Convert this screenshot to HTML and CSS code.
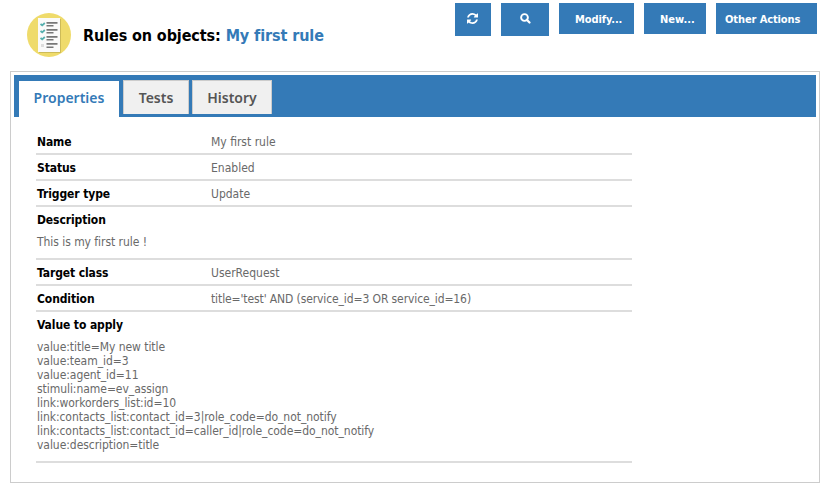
FILE: index.html
```html
<!DOCTYPE html>
<html lang="en">
<head>
<meta charset="utf-8">
<title>Rules on objects: My first rule</title>
<link rel="stylesheet" href="styles.css">
</head>
<body>
<header class="header">
  <svg class="badge" width="44" height="44" viewBox="0 0 44 44" aria-hidden="true">
    <circle cx="22" cy="22" r="22" fill="#efdb6b"/>
    <path d="M12 6h22v34H12z" fill="#cdbb58"/>
    <path d="M11 5h22v34H11z" fill="#fafafa"/>
    <path fill="#777" d="M19.500 9h11v1.700h-11zM19.500 12h7v1.600h-7zM19.500 16h11v1.700h-11zM19.500 19h7v1.600h-7zM19.500 23h11v1.700h-11zM19.500 26h7v1.600h-7zM19.500 30h11v1.700h-11zM19.500 33.500h7v1.600h-7z"/>
    <path fill="none" stroke="#55afae" stroke-width="1.800" d="M13.500 11l1.700 1.300 2.600-2.300M13.500 18l1.700 1.300 2.600-2.300M13.500 25l1.700 1.300 2.600-2.300"/>
    <path d="M14 31h3v3h-3z" fill="#ddd"/>
  </svg>
  <h1 class="title"><span class="title-class">Rules on objects:</span> <span class="title-name">My first rule</span></h1>
  <nav class="actions">
    <a class="btn btn-refresh" aria-label="Refresh"><svg width="11" height="11" viewBox="0 0 1536 1536"><path fill="#fff" d="M1511 928q0 5-1 7-64 268-268 434.500T764 1536q-146 0-282.500-55T238 1324l-129 129q-19 19-45 19t-45-19-19-45V960q0-26 19-45t45-19h448q26 0 45 19t19 45-19 45l-137 137q71 66 161 102t187 36q134 0 250-65t186-179q11-17 53-117 8-23 30-23h192q13 0 22.500 9.500t9.500 22.500zm25-800v448q0 26-19 45t-45 19h-448q-26 0-45-19t-19-45 19-45l138-138Q969 256 768 256q-134 0-250 65T332 500q-11 17-53 117-8 23-30 23H50q-13 0-22.500-9.500T18 608v-7q65-268 270-434.500T768 0q146 0 284 55.500T1297 212l130-129q19-19 45-19t45 19 19 45z"/></svg></a>
    <a class="btn btn-search" aria-label="Search"><svg width="11" height="11" viewBox="0 0 11 11"><circle cx="4.500" cy="4.500" r="3.400" fill="none" stroke="#fff" stroke-width="1.900"/><path d="M7 7l2.500 2.500" stroke="#fff" stroke-width="2.200" stroke-linecap="round"/></svg></a>
    <a class="btn btn-modify">Modify...</a>
    <a class="btn btn-new">New...</a>
    <a class="btn btn-other">Other Actions</a>
  </nav>
</header>
<main class="panel">
  <nav class="tabs">
    <a class="tab tab-active">Properties</a>
    <a class="tab tab-tests">Tests</a>
    <a class="tab tab-history">History</a>
  </nav>
  <dl class="details">
    <div class="row"><dt>Name</dt><dd>My first rule</dd></div>
    <div class="row"><dt>Status</dt><dd>Enabled</dd></div>
    <div class="row"><dt>Trigger type</dt><dd>Update</dd></div>
    <div class="row row-large"><dt>Description</dt><dd>This is my first rule !</dd></div>
    <div class="row"><dt>Target class</dt><dd>UserRequest</dd></div>
    <div class="row"><dt>Condition</dt><dd class="expression">title='test' AND (service_id=3 OR service_id=16)</dd></div>
    <div class="row row-large"><dt>Value to apply</dt><dd>value:title=My new title<br>value:team_id=3<br>value:agent_id=11<br>stimuli:name=ev_assign<br>link:workorders_list:id=10<br>link:contacts_list:contact_id=3|role_code=do_not_notify<br>link:contacts_list:contact_id=caller_id|role_code=do_not_notify<br>value:description=title</dd></div>
  </dl>
</main>
</body>
</html>
```
FILE: styles.css
```css
* { box-sizing: border-box; }
body {
  margin: 0;
  background: #fff;
  font: 12px/14px "DejaVu Sans Condensed", "DejaVu Sans", sans-serif;
  font-stretch: condensed;
  color: #696969;
}
.header {
  display: flex;
  align-items: flex-start;
  height: 71px;
  padding: 3px 3px 0 27px;
}
.badge { flex: none; margin-top: 10px; }
.title {
  margin: 23px 0 0 12px;
  font-size: 16px;
  line-height: 20px;
  white-space: nowrap;
  color: #000;
  letter-spacing: -0.1px;
}
.title-name { color: #347ab7; }
.actions { display: flex; gap: 10px; margin-left: auto; align-items: flex-start; }
.btn {
  display: flex;
  align-items: center;
  height: 31px;
  padding-top: 2px;
  background: #347ab7;
  color: #fff;
  font-size: 11px;
  font-weight: bold;
  white-space: nowrap;
}
.btn-refresh { width: 36px; height: 33px; padding: 0 0 3px 12px; }
.btn-search { width: 48px; height: 33px; padding: 0 0 3px 19px; }
.btn-modify { width: 75px; padding-left: 16px; letter-spacing: -0.1px; }
.btn-new { width: 62px; padding-left: 16px; }
.btn-other { width: 101px; padding-left: 9px; letter-spacing: -0.1px; }
.panel {
  width: 810px;
  height: 412px;
  margin-left: 10px;
  padding: 3px;
  border: 1px solid #ccc;
}
.tabs {
  display: flex;
  height: 42px;
  width: 802px;
  padding: 5px 0 0 5px;
  background: #347ab7;
  font: 600 14px/20px "Noto Sans", sans-serif;
}
.tab {
  height: 34px;
  padding-top: 7px;
  background: #f0f0f0;
  border: 1px solid #ccc;
  border-bottom: 0;
  color: #555;
  text-align: center;
}
.tab-active {
  width: 100px;
  height: 36px;
  margin: 1px 4px 0 0;
  border: 0;
  background: #fff;
  color: #347ab7;
}
.tab-tests { width: 66px; margin-right: 3px; }
.tab-history { width: 80px; }
.details { width: 596px; margin: 12px 0 0 22px; }
.row {
  display: flex;
  height: 26px;
  padding-top: 6px;
  border-bottom: 2px solid #ddd;
}
.row dt { width: 175px; padding-left: 1px; font-weight: bold; color: #000; letter-spacing: -0.1px; }
.row dd { margin: 0; white-space: nowrap; }
.row dd.expression { letter-spacing: -0.11px; }
.row-large { display: block; height: auto; padding-bottom: 9px; }
.row-large dd { margin: 8px 0 0; padding-left: 1px; letter-spacing: -0.05px; }
```
